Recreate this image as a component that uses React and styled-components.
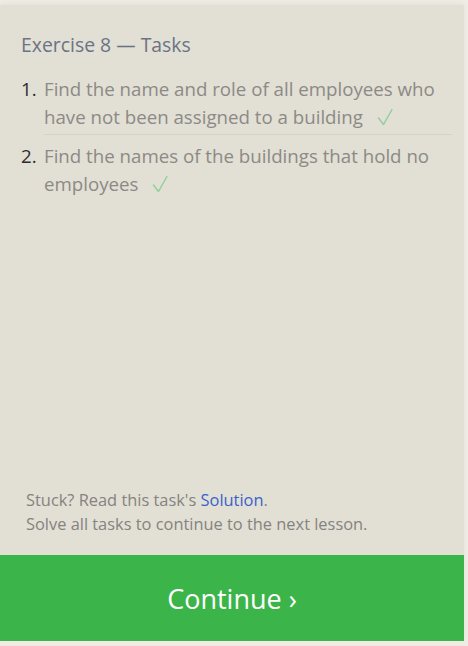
import React from "react"
import styled, { createGlobalStyle } from "styled-components"

const GlobalStyle = createGlobalStyle`
  html, body {
    margin: 0;
    padding: 0;
    background-color: #efece5;
    font-family: "Open Sans", "Noto Sans", sans-serif;
  }
`

const Panel = styled.div`
  width: 464px;
  height: 636px;
  margin-top: 5px;
  background-color: #e2dfd5;
  display: flex;
  flex-direction: column;
  box-shadow: 0 -2px 4px rgb(0 0 0 / 4%);
`

const Body = styled.div`
  flex: 1;
  display: flex;
  flex-direction: column;
  padding: 25px 12px 0 21px;
`

const Title = styled.h2`
  margin: 0 0 15px;
  font-size: 19.4px;
  font-weight: 400;
  color: #6b7385;
  line-height: 30px;
`

const TaskList = styled.ol`
  margin: 0;
  padding: 0;
  list-style: none;
`

const Task = styled.li`
  display: flex;
  font-size: 18.7px;
  line-height: 28px;
  & + & {
    padding-top: 7px;
  }
`

const Num = styled.span`
  width: 23px;
  color: #2c2c2c;
  flex-shrink: 0;
`

const TaskText = styled.span`
  color: #8c8a86;
  flex: 1;
  border-bottom: ${(p) => (p.$divider ? "1px solid #d5d2c8" : "none")};
  padding-bottom: 3px;
`

const Check = styled.svg`
  width: 16px;
  height: 18px;
  margin-left: 14px;
  vertical-align: -2px;
`

const Footer = styled.div`
  margin-top: auto;
  padding: 0 0 19px 5px;
  font-size: 16.4px;
  line-height: 24px;
  color: #85837f;
`

const Link = styled.a`
  color: #3a62c9;
  text-decoration: none;
`

const ContinueButton = styled.div`
  height: 86px;
  background-color: #3bb54a;
  color: #fff;
  font-size: 27px;
  display: flex;
  align-items: center;
  justify-content: center;
`

const tasks = [
  "Find the name and role of all employees who have not been assigned to a building",
  "Find the names of the buildings that hold no employees",
]

const CheckMark = () => (
  <Check viewBox="0 0 16 18" fill="none">
    <path d="M1.5 10 L6.5 16.5 L15 1.5" stroke="#8fcf98" strokeWidth="1.4" strokeLinecap="round" strokeLinejoin="round" />
  </Check>
)

export default function App() {
  return (
    <>
      <GlobalStyle />
      <Panel>
        <Body>
          <Title>Exercise 8 — Tasks</Title>
          <TaskList>
            {tasks.map((t, i) => (
              <Task key={i}>
                <Num>{i + 1}.</Num>
                <TaskText $divider={i < tasks.length - 1}>
                  {t}
                  <CheckMark />
                </TaskText>
              </Task>
            ))}
          </TaskList>
          <Footer>
            Stuck? Read this task's <Link href="#">Solution</Link>.
            <br />
            Solve all tasks to continue to the next lesson.
          </Footer>
        </Body>
        <ContinueButton>Continue ›</ContinueButton>
      </Panel>
    </>
  )
}
